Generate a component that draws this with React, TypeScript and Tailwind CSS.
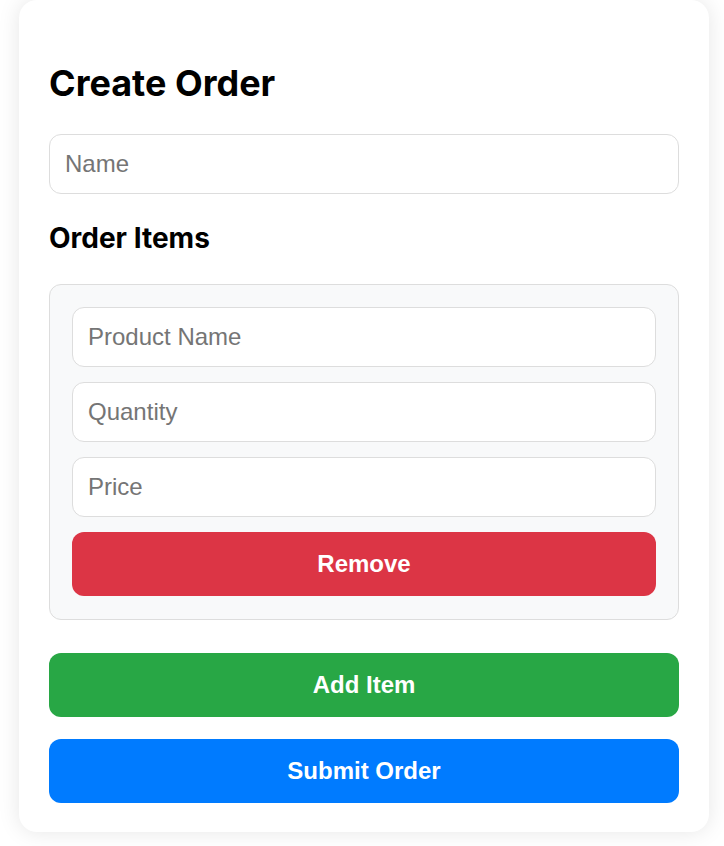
import React from 'react';

const inputCls =
  "w-full h-[60px] rounded-[12px] border border-[#dddddd] bg-white px-[15px] text-[24px] text-black placeholder:text-[#757575] outline-none";

const Field = ({ placeholder }: { placeholder: string }) => (
  <input type="text" placeholder={placeholder} className={inputCls} />
);

const ActionButton = ({ label, color }: { label: string; color: string }) => (
  <button
    type="button"
    className={`w-full h-[64px] rounded-[12px] ${color} text-white text-[24px] font-bold`}
  >
    {label}
  </button>
);

export default function App() {
  return (
    <div className="min-h-screen bg-white font-['Liberation_Sans',Arial,sans-serif]">
      <div className="ml-[19px] w-[690px] rounded-[18px] bg-white px-[30px] pt-[30px] pb-[29px] shadow-[0_0_22px_rgba(0,0,0,0.1)]">
        <h1 className="mt-[31px] mb-[29px] font-['Inter',sans-serif] text-[36px] leading-[44px] font-bold text-black">
          Create Order
        </h1>

        <Field placeholder="Name" />

        <h3 className="mt-[27px] mb-[29px] font-['Inter',sans-serif] text-[28px] leading-[34px] font-bold text-black">
          Order Items
        </h3>

        <div className="rounded-[12px] border border-[#dddddd] bg-[#f8f9fa] px-[22px] pt-[22px] pb-[23px] flex flex-col gap-[15px]">
          <Field placeholder="Product Name" />
          <Field placeholder="Quantity" />
          <Field placeholder="Price" />
          <ActionButton label="Remove" color="bg-[#dc3545]" />
        </div>

        <div className="mt-[33px] flex flex-col gap-[22px]">
          <ActionButton label="Add Item" color="bg-[#28a745]" />
          <ActionButton label="Submit Order" color="bg-[#007bff]" />
        </div>
      </div>
    </div>
  );
}
